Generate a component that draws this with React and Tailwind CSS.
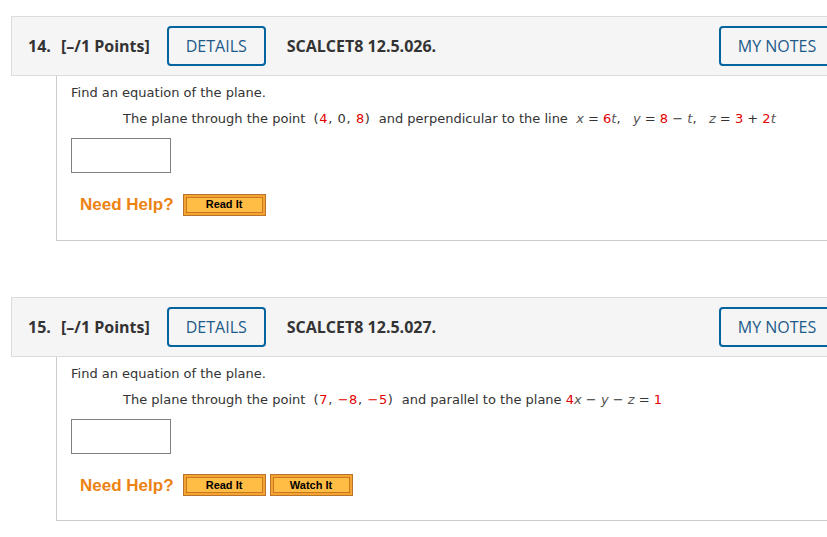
const bodyFont = { fontFamily: '"DejaVu Sans", Verdana, sans-serif' }

function HelpButton({ label, width }) {
  return (
    <button
      type="button"
      className={`h-[22px] ${width} border border-[#b8742a] bg-[#f5a433] p-[2px]`}
    >
      <span className="flex h-full w-full items-center justify-center border border-[#c9781e] bg-[#ffbd45] font-['Liberation_Sans',Arial,sans-serif] text-[11px] font-bold leading-none text-black">
        {label}
      </span>
    </button>
  )
}

function Num({ children }) {
  return <span className="text-[#e30000]">{children}</span>
}

function Var({ children }) {
  return <span className="italic text-[#555]">{children}</span>
}

function Question({ num, code, statement, helpers }) {
  return (
    <div className="w-[860px]">
      <div className="ml-[11px] flex h-[60px] items-center border border-[#dcdcdc] bg-[#f5f5f5] pl-[16px] pr-[24px] font-['Open_Sans',sans-serif] text-[16px] font-bold text-[#333]">
        <span className="w-[33px]">{num}.</span>
        <span>[–/1 Points]</span>
        <button
          type="button"
          className="ml-[17px] h-[40px] w-[99px] rounded-[4px] border-2 border-[#05649e] font-normal text-[#1d5a8a]"
        >
          DETAILS
        </button>
        <span className="ml-[21px]">SCALCET8 {code}.</span>
        <button
          type="button"
          className="ml-auto h-[40px] w-[116px] rounded-[4px] border-2 border-[#05649e] font-normal text-[#1d5a8a]"
        >
          MY NOTES
        </button>
      </div>
      <div
        className="ml-[56px] border-b border-l border-[#cccccc] pb-[22px] pl-[14px] pt-[7px] text-[13px] text-[#333]"
        style={bodyFont}
      >
        <p className="leading-[20px]">Find an equation of the plane.</p>
        <p className="mt-[6px] pl-[52px] leading-[20px] whitespace-pre">{statement}</p>
        <div className="mt-[9px] h-[35px] w-[100px] border border-[#808080] bg-white" />
        <div className="mt-[19px] flex items-center gap-[9px] pl-[9px]">
          <span className="font-['Liberation_Sans',Arial,sans-serif] text-[17px] font-bold text-[#ec8212]">
            Need Help?
          </span>
          <div className="flex gap-[4px]">{helpers}</div>
        </div>
      </div>
    </div>
  )
}

export default function App() {
  return (
    <div className="h-[537px] w-[827px] overflow-hidden bg-white pt-[16px]">
      <Question
        num="14"
        code="12.5.026"
        statement={
          <>
            The plane through the point  <span className="tracking-[0.6px]">(<Num>4</Num>, 0, <Num>8</Num>)</span>  and perpendicular to the line  <Var>x</Var> = <Num>6</Num><Var>t</Var>,   <Var>y</Var> = <Num>8</Num> − <Var>t</Var>,   <Var>z</Var> = <Num>3</Num> + <Num>2</Num><Var>t</Var>
          </>
        }
        helpers={<HelpButton label="Read It" width="w-[83px]" />}
      />
      <div className="h-[56px]" />
      <Question
        num="15"
        code="12.5.027"
        statement={
          <>
            The plane through the point  <span className="tracking-[0.6px]">(<Num>7</Num>, <Num>−8</Num>, <Num>−5</Num>)</span>  and parallel to the plane <Num>4</Num><Var>x</Var> − <Var>y</Var> − <Var>z</Var> = <Num>1</Num>
          </>
        }
        helpers={
          <>
            <HelpButton label="Read It" width="w-[83px]" />
            <HelpButton label="Watch It" width="w-[83px]" />
          </>
        }
      />
    </div>
  )
}
